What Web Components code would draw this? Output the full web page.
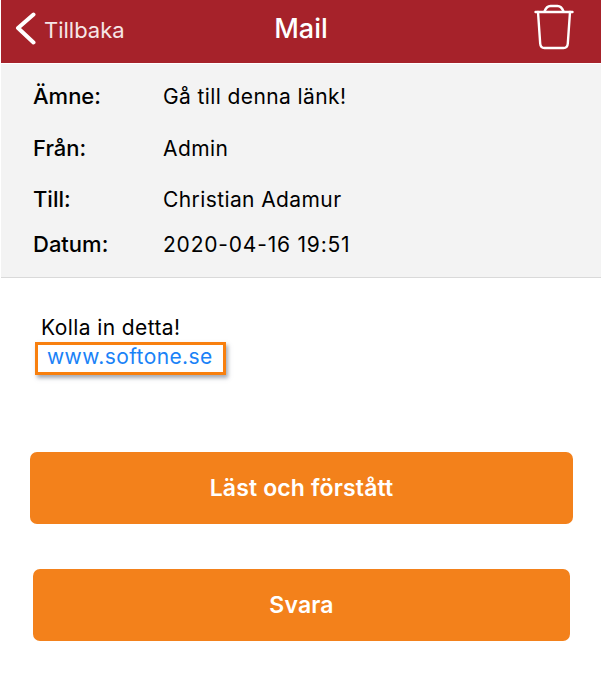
<!DOCTYPE html>
<html>
<head>
<meta charset="utf-8">
<title>Mail</title>
<style>
  html, body { margin: 0; padding: 0; background: #fff; }
  body { width: 601px; height: 675px; overflow: hidden; font-family: Inter, "Liberation Sans", sans-serif; }
</style>
</head>
<body>
<mail-screen>
  <nav-bar slot="nav" title="Mail" back="Tillbaka"></nav-bar>
  <mail-header slot="head">
    <mail-field label="Ämne:" style="height:51px">Gå till denna länk!</mail-field>
    <mail-field label="Från:" style="height:52px;--label-shift:0px">Admin</mail-field>
    <mail-field label="Till:" style="height:51px">Christian Adamur</mail-field>
    <mail-field label="Datum:" style="height:39px;letter-spacing:.8px">2020-04-16 19:51</mail-field>
  </mail-header>
  <mail-body slot="body" link="www.softone.se">Kolla in detta!</mail-body>
  <action-button slot="first" style="margin:0 28px 0 30px">Läst och förstått</action-button>
  <action-button slot="second" style="margin:45px 31px 0 33px">Svara</action-button>
</mail-screen>

<script>
customElements.define('mail-screen',
  class extends HTMLElement {
    constructor () {
      super()
      this.attachShadow({ mode: 'open' }).innerHTML = `
        <style>
          :host { display: block; width: 601px; }
          .top { padding-left: 1px; }
          .actions { display: block; }
        </style>
        <div class="top">
          <slot name="nav"></slot>
          <slot name="head"></slot>
        </div>
        <slot name="body"></slot>
        <div class="actions">
          <slot name="first"></slot>
          <slot name="second"></slot>
        </div>
      `
    }
  })

customElements.define('nav-bar',
  class extends HTMLElement {
    constructor () {
      super()
      this.attachShadow({ mode: 'open' }).innerHTML = `
        <style>
          :host { display: block; }
          .bar {
            height: 63px;
            background: #a6222a;
            color: #fff;
            display: grid;
            grid-template-columns: 1fr auto 1fr;
            align-items: center;
          }
          .back { display: flex; align-items: center; font-size: 22px; color: #f6e6e7; padding-left: 14px; gap: 8px; }
          .back svg { display: block; margin-top: -7px; }
          .back span { margin-top: -4px; }
          .title { font-size: 27px; font-weight: 500; margin-top: -6px; }
          .trash { justify-self: end; align-self: start; padding: 4px 27px 0 0; }
          .trash svg { display: block; }
        </style>
        <div class="bar">
          <div class="back">
            <svg width="21" height="33" viewBox="0 0 21 33" fill="none" stroke="#fff" stroke-width="4" stroke-linecap="round" stroke-linejoin="round"><path d="M18.500 2.500 3 16 18.500 30.500"/></svg>
            <span>${this.getAttribute('back')}</span>
          </div>
          <div class="title">${this.getAttribute('title')}</div>
          <div class="trash">
            <svg width="40" height="46" viewBox="0 0 40 46" fill="none" stroke="#fff" stroke-width="2.400" stroke-linejoin="round" stroke-linecap="round"><path d="M1.500 8h37"/><path d="M4 8l2.200 31.500q.3 4.500 4.300 4.500h19q4 0 4.300-4.500L36 8"/><path d="M10.500 7.500q2-5.500 6-5.500h7q4 0 6 5.500"/></svg>
          </div>
        </div>
      `
    }
  })

customElements.define('mail-header',
  class extends HTMLElement {
    constructor () {
      super()
      this.attachShadow({ mode: 'open' }).innerHTML = `
        <style>
          :host { display: block; background: #f3f3f3; border-bottom: 1px solid #d9d9d9; padding: 7px 0 8px; height: 198px; margin-top: 1px; box-sizing: content-box; }
        </style>
        <slot></slot>
      `
    }
  })

customElements.define('mail-field',
  class extends HTMLElement {
    constructor () {
      super()
      this.attachShadow({ mode: 'open' }).innerHTML = `
        <style>
          :host { display: grid; grid-template-columns: 130px 1fr; align-items: center; padding-left: 32px; color: #000; font-size: 21px; letter-spacing: .4px; }
          .label { font-weight: 500; font-size: 22px; letter-spacing: 0; margin-top: var(--label-shift, -2px); }
        </style>
        <div class="label">${this.getAttribute('label')}</div>
        <div class="value"><slot></slot></div>
      `
    }
  })

customElements.define('mail-body',
  class extends HTMLElement {
    constructor () {
      super()
      this.attachShadow({ mode: 'open' }).innerHTML = `
        <style>
          :host { display: block; height: 174px; padding: 36px 0 0 35px; box-sizing: border-box; font-size: 21px; color: #000; letter-spacing: .4px; }
          .text { padding-left: 6px; line-height: 28px; }
          .link {
            display: block;
            width: 191px;
            height: 33px;
            box-sizing: border-box;
            border: 3px solid #f8800f;
            box-shadow: 2px 3px 4px rgba(90, 100, 120, .55);
            color: #1a82f7;
            padding-left: 9px;
            line-height: 24px;
            background: #fff;
          }
        </style>
        <div class="text"><slot></slot></div>
        <div class="link">${this.getAttribute('link')}</div>
      `
    }
  })

customElements.define('action-button',
  class extends HTMLElement {
    constructor () {
      super()
      this.attachShadow({ mode: 'open' }).innerHTML = `
        <style>
          :host { display: block; }
          .btn {
            height: 72px;
            border-radius: 7px;
            background: #f3811b;
            color: #fff;
            font-size: 23px;
            font-weight: 600;
            letter-spacing: .15px;
            display: flex;
            align-items: center;
            justify-content: center;
          }
        </style>
        <div class="btn"><slot></slot></div>
      `
    }
  })
</script>
</body>
</html>
